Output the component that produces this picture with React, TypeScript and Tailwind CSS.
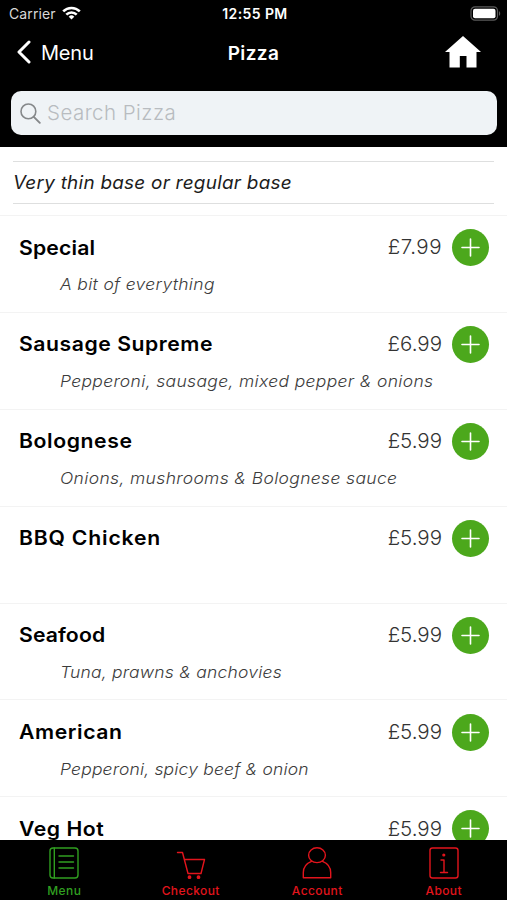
import type { ReactNode } from 'react';

interface MenuItem {
  name: string;
  nameClass: string;
  price: string;
  priceClass?: string;
  description?: string;
  descriptionClass?: string;
}

interface TabProps {
  label: string;
  active?: boolean;
  children: ReactNode;
}

const items: MenuItem[] = [
  { name: 'Special', nameClass: 'tracking-[0.15px]', price: '£7.99', priceClass: 'tracking-[0.5px]', description: 'A bit of everything', descriptionClass: 'tracking-[0.3px]' },
  { name: 'Sausage Supreme', nameClass: 'tracking-[0.5px]', price: '£6.99', description: 'Pepperoni, sausage, mixed pepper & onions', descriptionClass: 'tracking-[0.32px]' },
  { name: 'Bolognese', nameClass: 'tracking-[0.55px]', price: '£5.99', description: 'Onions, mushrooms & Bolognese sauce', descriptionClass: 'tracking-[0.33px]' },
  { name: 'BBQ Chicken', nameClass: 'tracking-[0.75px]', price: '£5.99' },
  { name: 'Seafood', nameClass: 'tracking-[0.1px]', price: '£5.99', description: 'Tuna, prawns & anchovies', descriptionClass: 'tracking-[0.2px]' },
  { name: 'American', nameClass: 'tracking-[0.55px]', price: '£5.99', description: 'Pepperoni, spicy beef & onion', descriptionClass: 'tracking-[0.17px]' },
  { name: 'Veg Hot', nameClass: 'tracking-[0.5px]', price: '£5.99' },
];

const StatusBar = () => (
  <div className="grid h-7 grid-cols-3 items-center pl-[9px] pr-[6px] text-white">
    <div className="flex items-center gap-[6px]">
      <span className="text-[14px] leading-none tracking-[0.1px] text-[#d8d8d8]">Carrier</span>
      <svg width="19" height="14" viewBox="0 0 19 14" className="-mt-[2px]" fill="none" stroke="white" strokeWidth="2.6">
        <path d="M1.2 5.4a11.8 11.8 0 0 1 16.6 0" />
        <path d="M4.3 8.6a7.4 7.4 0 0 1 10.4 0" />
        <path d="M9.5 13.5l-2.8-2.8a4 4 0 0 1 5.6 0z" fill="white" stroke="none" />
      </svg>
    </div>
    <span className="text-center text-[14px] leading-none font-semibold tracking-[0.4px] whitespace-nowrap">12:55 PM</span>
    <svg width="31" height="15" viewBox="0 0 31 15" className="-mt-[1px] justify-self-end">
      <rect x="1" y="0.8" width="26.5" height="13.4" rx="4" fill="none" stroke="#5b5b5b" strokeWidth="1.2" />
      <rect x="3" y="2.8" width="22.5" height="9.4" rx="2" fill="white" />
      <path d="M29 5.2c1.6.6 1.6 4 0 4.6z" fill="#5b5b5b" />
    </svg>
  </div>
);

const NavBar = () => (
  <div className="grid h-[50px] grid-cols-3 items-center pr-[26px] pl-[16px] text-white">
    <button className="flex items-center gap-[10px]">
      <svg width="15" height="24" viewBox="0 0 15 24" className="-mt-[2px]" fill="none" stroke="white" strokeWidth="3" strokeLinecap="round" strokeLinejoin="round">
        <path d="M13 2L3 12l10 10" />
      </svg>
      <span className="text-[20px] leading-none -tracking-[0.2px]">Menu</span>
    </button>
    <h1 className="pl-[10px] text-center text-[19px] leading-none font-semibold tracking-[0.4px]">Pizza</h1>
    <svg width="36" height="32" viewBox="0 0 36 32" className="-mt-[3px] justify-self-end" fill="white">
      <path d="M18 0L36 16h-4.5v15.5H21.5V20h-6.7v11.5H4.5V16H0z" />
    </svg>
  </div>
);

const SearchBox = () => (
  <div className="mt-[13px] mr-[10px] ml-[11px] flex h-[44px] items-center gap-[6px] rounded-[10px] bg-[#eff3f6] pl-[9px]">
    <svg width="21" height="21" viewBox="0 0 21 21" fill="none" stroke="#85888a" strokeWidth="1.6" strokeLinecap="round">
      <circle cx="8.4" cy="8.4" r="7.4" />
      <path d="M13.8 13.8l6 6" strokeWidth="1.9" />
    </svg>
    <span className="pt-[1px] text-[20.5px] leading-none font-light tracking-[0.45px] text-[#b8bcc0]">Search Pizza</span>
  </div>
);

const MenuRow = ({ item }: { item: MenuItem }) => (
  <li className="h-[96.9px] shrink-0 border-t border-[#f3f3f3] pt-[13.1px] pr-[18px] pl-[19px]">
    <div className="flex h-[37px] items-center">
      <h2 className={`grow origin-left scale-x-[1.06] text-[20px] leading-none font-semibold text-black ${item.nameClass}`}>{item.name}</h2>
      <span className={`mr-[10px] text-[20.5px] leading-none font-light text-[#333] ${item.priceClass ?? ''}`}>{item.price}</span>
      <button className="flex size-[37px] items-center justify-center rounded-full bg-[#4ca81c]">
        <svg width="19" height="19" viewBox="0 0 19 19" stroke="white" strokeWidth="1.6" strokeLinecap="round">
          <path d="M9.5 1v17M1 9.5h17" />
        </svg>
      </button>
    </div>
    {item.description && (
      <p className={`mt-[6px] ml-[41px] origin-left scale-x-[1.06] text-[16.5px] leading-[24px] font-light whitespace-nowrap text-[#3c3c3c] italic [font-feature-settings:'cv11'] ${item.descriptionClass}`}>
        {item.description}
      </p>
    )}
  </li>
);

const Tab = ({ label, active, children }: TabProps) => (
  <button className={`flex flex-1 flex-col items-center pt-[6px] ${active ? 'text-[#309f20]' : 'text-[#e2141c]'}`}>
    <svg width="32" height="34" viewBox="0 0 32 34" fill="none" stroke="currentColor" strokeWidth="1.4" strokeLinejoin="round" strokeLinecap="round">
      {children}
    </svg>
    <span className="mt-[4px] text-[12px] leading-[14px] font-medium tracking-[0.4px]">{label}</span>
  </button>
);

const TabBar = () => (
  <nav className="flex h-[60px] shrink-0 bg-black pl-[1px]">
    <Tab label="Menu" active>
      <rect x="2" y="2" width="28" height="30" rx="3" />
      <path d="M6.3 2v30M11 10h14.500M11 16h14.500M11 22h14.500" />
    </Tab>
    <Tab label="Checkout">
      <path d="M2.5 6.5h5L13 27.500h13l3.500-14H9.500" />
      <circle cx="14.500" cy="31.200" r="1.2" fill="currentColor" />
      <circle cx="23.500" cy="31.200" r="1.2" fill="currentColor" />
    </Tab>
    <Tab label="Account">
      <ellipse cx="16" cy="9.2" rx="8.4" ry="7.4" />
      <path d="M10.5 15.3C5.5 17.3 2.3 21.3 2.3 26.500v5.300h27.400v-5.300c0-5.200-3.200-9.200-8.200-11.200" />
    </Tab>
    <Tab label="About">
      <rect x="2" y="2" width="28" height="30" rx="2.500" />
      <path d="M13 14h3v12.500M12.500 26.500h7" />
      <circle cx="15.800" cy="9" r="0.900" fill="currentColor" />
    </Tab>
  </nav>
);

export default function App() {
  return (
    <div className="flex h-[900px] w-[507px] flex-col overflow-hidden bg-white font-['Inter',sans-serif]">
      <header className="h-[147px] shrink-0 bg-black">
        <StatusBar />
        <NavBar />
        <SearchBox />
      </header>
      <main className="flex min-h-0 grow flex-col overflow-hidden">
        <div className="mx-[13px] mt-[14px] mb-[11px] h-[43px] shrink-0 border-y-[1.5px] border-[#dedfdf]">
          <p className="origin-left scale-x-[1.05] text-[18px] leading-[41px] tracking-[0.25px] text-[#1c1c1c] italic [font-feature-settings:'cv11']">
            Very thin base or regular base
          </p>
        </div>
        <ul className="flex flex-col">
          {items.map((item) => (
            <MenuRow key={item.name} item={item} />
          ))}
        </ul>
      </main>
      <TabBar />
    </div>
  );
}
